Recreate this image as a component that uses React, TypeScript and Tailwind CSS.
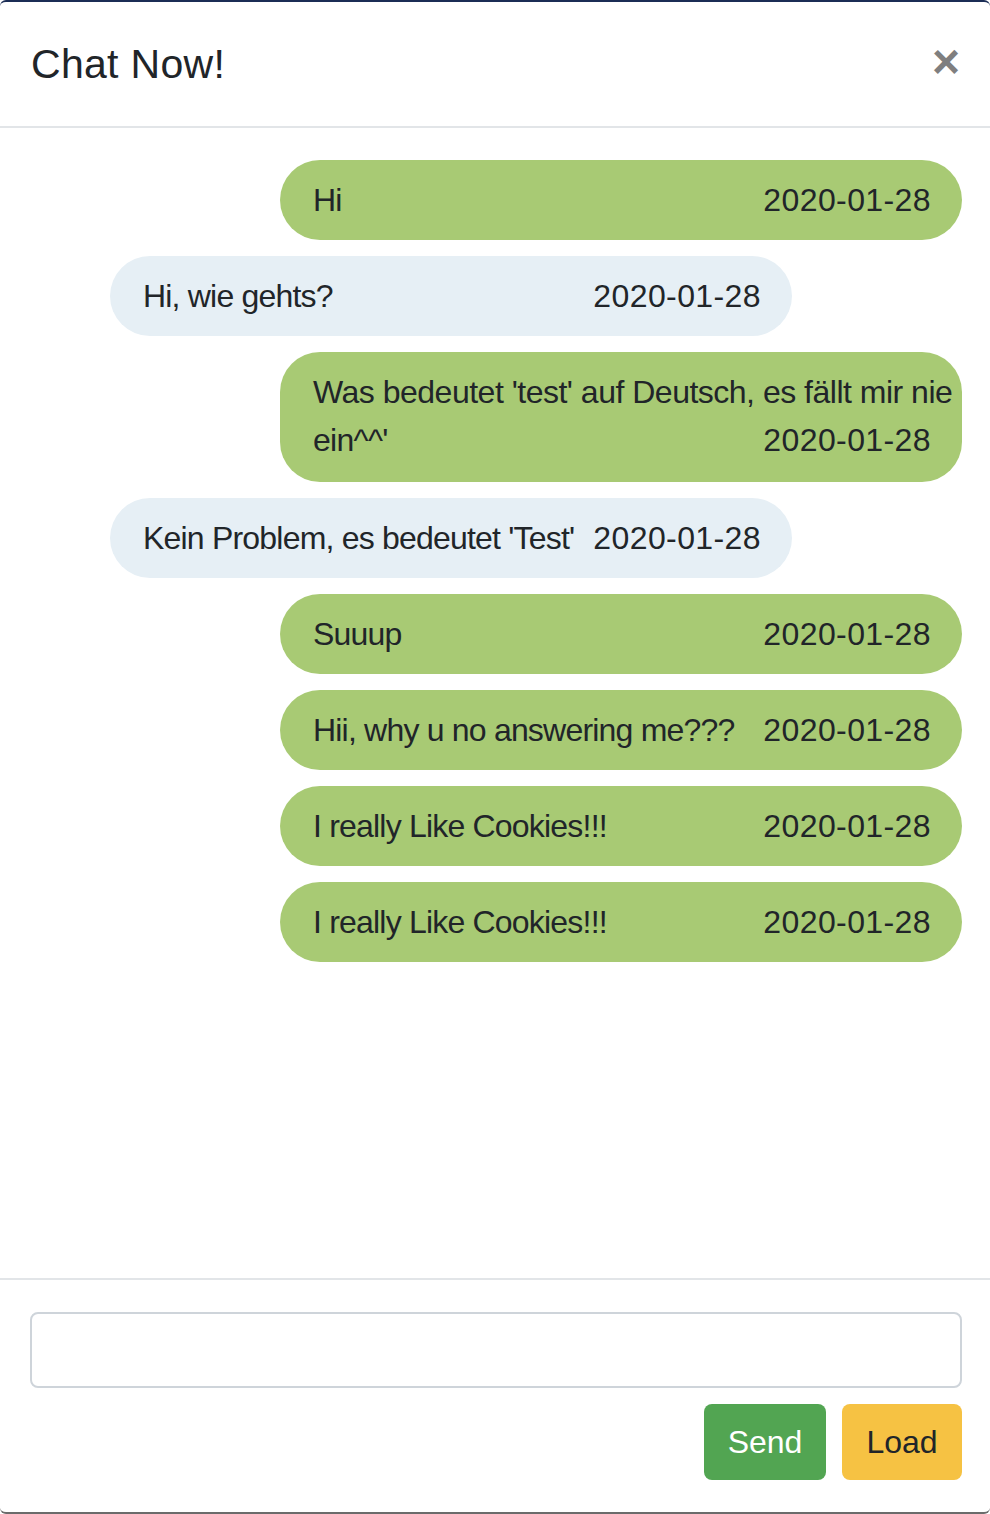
import React from "react";

type Msg = { text: string; date: string; mine: boolean; lines?: [string, string] };

const messages: Msg[] = [
  { text: "Hi", date: "2020-01-28", mine: true },
  { text: "Hi, wie gehts?", date: "2020-01-28", mine: false },
  {
    text: "Was bedeutet 'test' auf Deutsch, es fällt mir nie ein^^'",
    date: "2020-01-28",
    mine: true,
    lines: ["Was bedeutet 'test' auf Deutsch, es fällt mir nie", "ein^^'"],
  },
  { text: "Kein Problem, es bedeutet 'Test'", date: "2020-01-28", mine: false },
  { text: "Suuup", date: "2020-01-28", mine: true },
  { text: "Hii, why u no answering me???", date: "2020-01-28", mine: true },
  { text: "I really Like Cookies!!!", date: "2020-01-28", mine: true },
  { text: "I really Like Cookies!!!", date: "2020-01-28", mine: true },
];

function Bubble({ m }: { m: Msg }) {
  const color = m.mine ? "bg-[#a8ca74]" : "bg-[#e6eff5]";
  return (
    <div className={`flex ${m.mine ? "justify-end" : "justify-start pl-[78px]"}`}>
      <div
        className={`w-[682px] rounded-[40px] pl-[33px] pr-[31px] text-[32px] leading-[48px] text-[#212529] ${color} ${
          m.lines ? "pb-[18px] pt-[16px]" : "py-[16px]"
        }`}
      >
        {m.lines ? (
          <>
            <div className="whitespace-nowrap tracking-[-0.5px]">{m.lines[0]}</div>
            <div className="flex justify-between whitespace-nowrap">
              <span className="tracking-[-0.7px]">{m.lines[1]}</span>
              <span className="tracking-[0.4px]">{m.date}</span>
            </div>
          </>
        ) : (
          <div className="flex justify-between gap-[10px] whitespace-nowrap">
            <span className="tracking-[-0.8px]">{m.text}</span>
            <span className="tracking-[0.4px]">{m.date}</span>
          </div>
        )}
      </div>
    </div>
  );
}

export default function App() {
  return (
    <main className="h-[1514px] w-[990px] bg-white font-['Liberation_Sans',Arial,sans-serif] text-[#212529]">
      <div className="flex h-full flex-col overflow-hidden rounded-[6px] border-t-2 border-b-2 border-t-[#1b2d55] border-b-[#6b6b6b] bg-white">
        {/* Header */}
        <header className="flex h-[126px] shrink-0 items-center justify-between border-b-2 border-[#e2e5e8] pl-[31px] pr-[30px]">
          <h5 className="text-[41px] font-medium leading-[60px] tracking-[0.3px]">Chat Now!</h5>
          <button className="pb-[4px] text-[48px] font-bold leading-none text-[#7f7f7f]">×</button>
        </header>

        {/* Messages */}
        <section className="flex flex-1 flex-col gap-[16px] pl-[32px] pr-[28px] pt-[32px]">
          {messages.map((m, i) => (
            <Bubble key={i} m={m} />
          ))}
        </section>

        {/* Footer */}
        <footer className="shrink-0 border-t-2 border-[#e2e5e8] pb-[32px] pl-[30px] pr-[28px] pt-[32px]">
          <input className="h-[76px] w-full rounded-[8px] border-2 border-[#ced4da] px-[24px] text-[32px] outline-none" />
          <div className="mt-[16px] flex justify-end gap-[16px]">
            <button className="h-[76px] w-[122px] rounded-[8px] bg-[#52a552] text-[32px] text-white">Send</button>
            <button className="h-[76px] w-[120px] rounded-[8px] bg-[#f6c243] text-[32px] text-[#212529]">Load</button>
          </div>
        </footer>
      </div>
    </main>
  );
}
